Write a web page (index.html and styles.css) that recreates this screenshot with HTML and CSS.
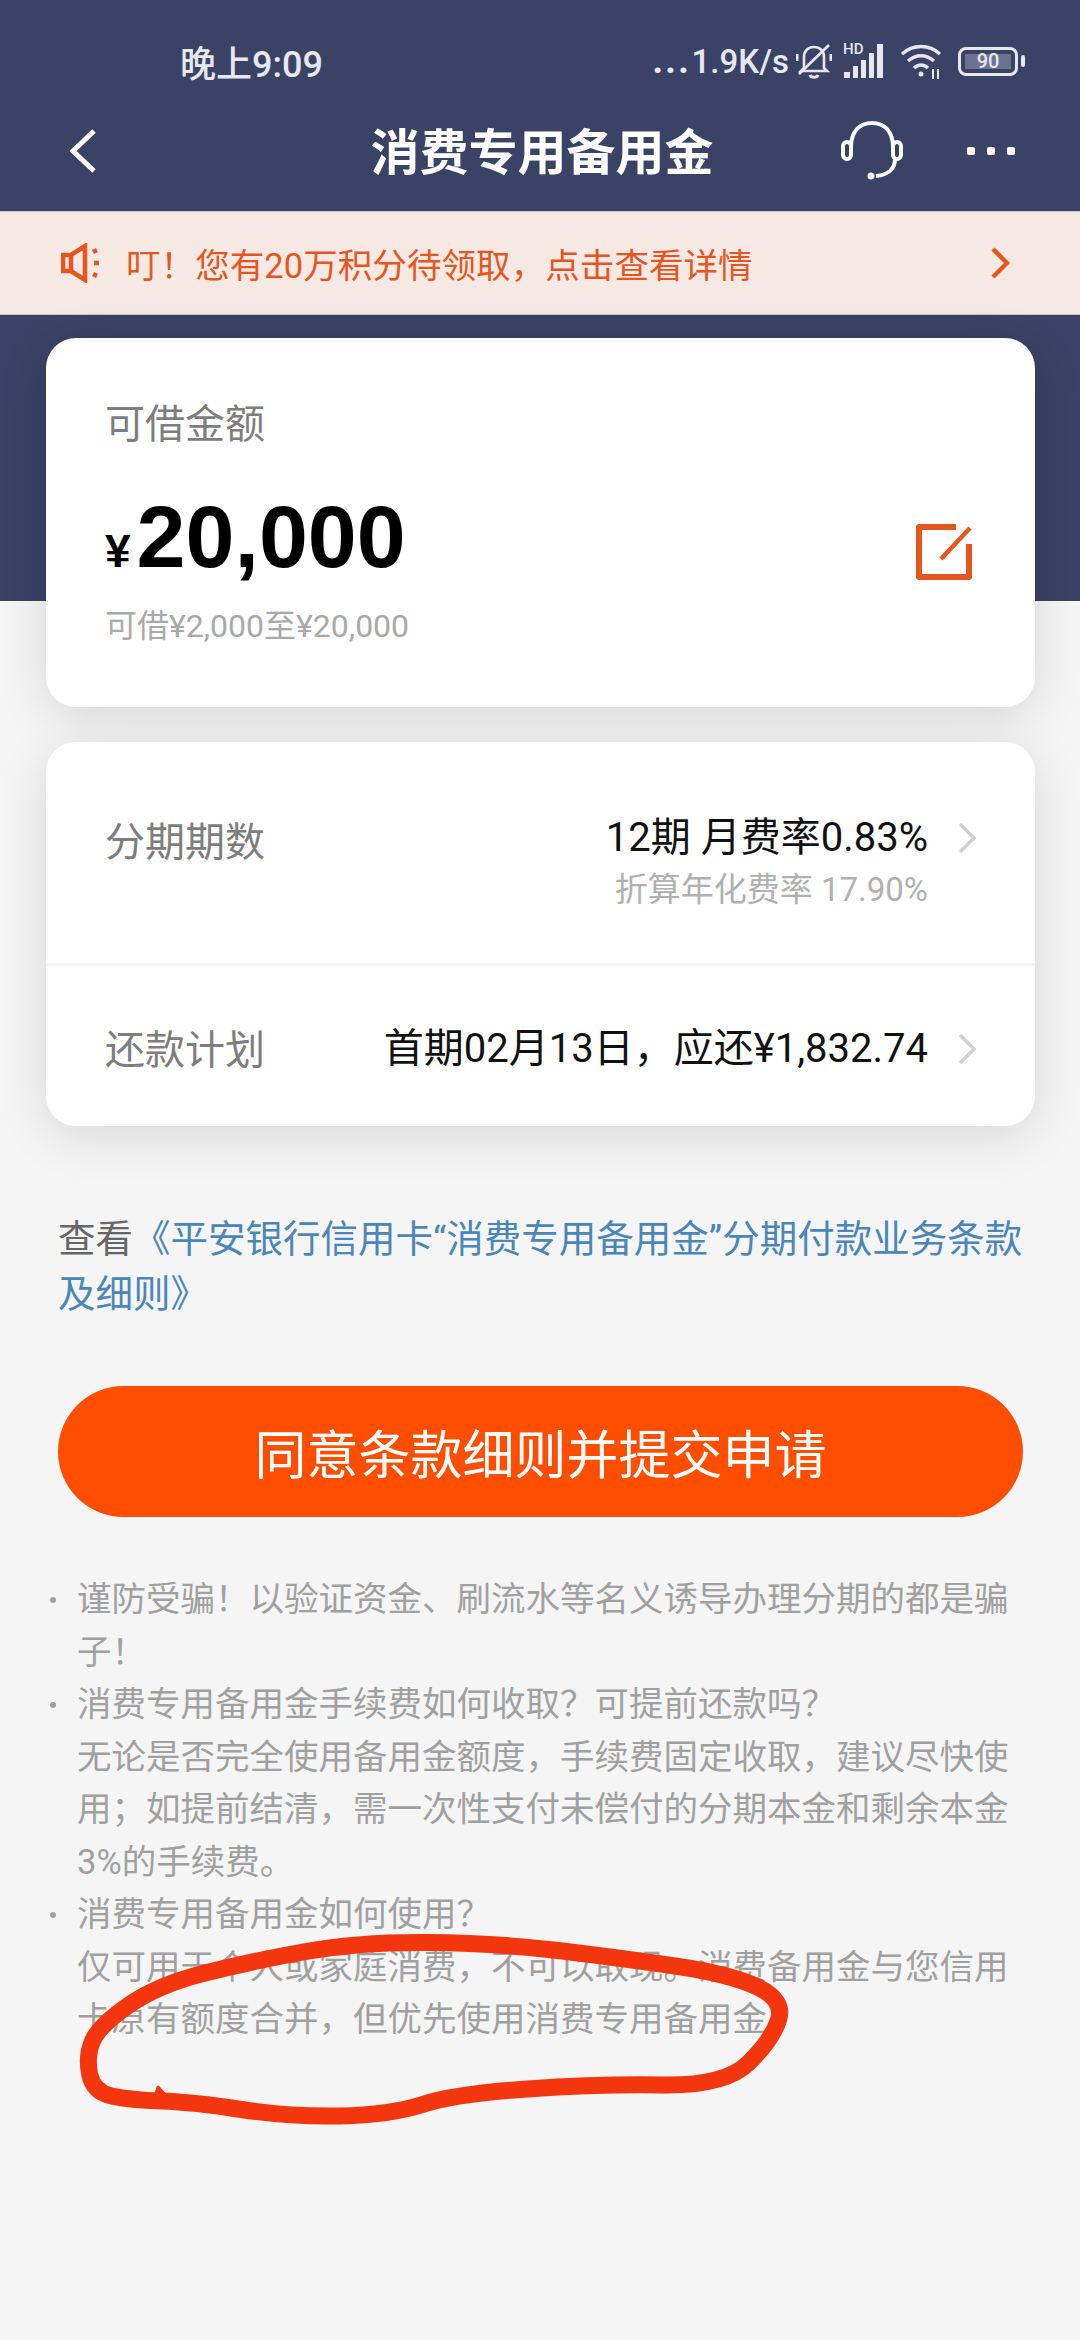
FILE: index.html
```html
<!DOCTYPE html>
<html lang="zh-CN">
<head>
    <meta charset="UTF-8">
    <meta name="viewport" content="width=device-width, initial-scale=1.0">
    <title>消费专用备用金</title>
    <link rel="stylesheet" href="styles.css">
</head>
<body>
    <div class="page">
        <header class="top">
            <div class="status">
                <span class="time">晚上9:09</span>
                <div class="status-right">
                    <span class="speed"><i class="dots">...</i>1.9K/s</span>
                    <svg class="bell" width="36" height="40" viewBox="0 0 36 40" fill="none" stroke="#e6e8f0" stroke-width="2.6">
                        <path d="M8 27V16c0-6 4-10 10-10s10 4 10 10v11l3 3H5z"/>
                        <path d="M14 34c1 3 7 3 8 0" stroke-width="3"/>
                        <path d="M3 33L33 4"/>
                        <path d="M1 13v7M35 13v7" stroke-width="3"/>
                    </svg>
                    <svg class="signal" width="42" height="40" viewBox="0 0 42 40" fill="#e6e8f0">
                        <text x="0" y="13" class="hd">HD</text>
                        <rect x="1" y="31" width="6" height="6"/>
                        <rect x="10" y="25" width="5" height="12"/>
                        <rect x="18" y="19" width="5" height="18"/>
                        <rect x="26" y="12" width="5" height="25"/>
                        <rect x="34" y="3" width="6" height="34"/>
                    </svg>
                    <svg class="wifi" width="42" height="40" viewBox="0 0 42 40" fill="none" stroke="#e6e8f0" stroke-width="3.4">
                        <path d="M2 13c11-10 27-10 38 0"/>
                        <path d="M8 20c8-7 18-7 26 0"/>
                        <path d="M14 27c4-4 10-4 14 0"/>
                        <circle cx="21" cy="33" r="2.5" fill="#e6e8f0" stroke="none"/>
                        <path d="M33 28v10M38 28v10" stroke-width="2"/>
                    </svg>
                    <div class="battery"><span class="battery-level">90</span></div>
                </div>
            </div>
            <nav class="nav">
                <svg class="back" width="28" height="44" viewBox="0 0 28 44" fill="none" stroke="#fff" stroke-width="5">
                    <path d="M25 2L4 22l21 20"/>
                </svg>
                <h1 class="title">消费专用备用金</h1>
                <div class="nav-actions">
                    <svg class="headset" width="64" height="60" viewBox="0 0 64 60" fill="none" stroke="#fff" stroke-width="4">
                        <path d="M11 26C11 10 20 2 32 2s21 8 21 24"/>
                        <rect x="3" y="21" width="8" height="17" rx="4"/>
                        <rect x="53" y="21" width="8" height="17" rx="4"/>
                        <path d="M55 38c0 10-7 16-19 17"/>
                        <circle cx="31" cy="55" r="3.5" fill="#fff" stroke="none"/>
                    </svg>
                    <svg class="more" width="48" height="10" viewBox="0 0 48 10" fill="#fff">
                        <rect x="0" y="1" width="8" height="8" rx="2"/>
                        <rect x="20" y="1" width="8" height="8" rx="2"/>
                        <rect x="40" y="1" width="8" height="8" rx="2"/>
                    </svg>
                </div>
            </nav>
        </header>

        <div class="notice">
            <svg class="horn" width="40" height="40" viewBox="0 0 40 40" fill="none" stroke="#e5561f" stroke-width="4.5">
                <path d="M2 12h8v16H2zM10 12L24 3v34L10 28"/>
                <path d="M32 9l4-2M33 20h5M32 31l4 2"/>
            </svg>
            <span class="notice-text">叮！您有20万积分待领取，点击查看详情</span>
            <svg class="notice-arrow" width="20" height="32" viewBox="0 0 20 32" fill="none" stroke="#e5561f" stroke-width="4.4">
                <path d="M3 2l14 14L3 30"/>
            </svg>
        </div>

        <main class="content">
            <section class="card amount-card">
                <div>
                    <p class="label">可借金额</p>
                    <p class="amount"><span class="yen">¥</span>20,000</p>
                    <p class="range">可借¥2,000至¥20,000</p>
                </div>
                <svg class="edit" width="56" height="56" viewBox="0 0 56 56" fill="none" stroke="#e5561f" stroke-width="6" stroke-linejoin="round">
                    <path d="M40 3H3v50h50V20"/>
                    <path d="M54 4L25 35" stroke-width="4.5"/>
                </svg>
            </section>

            <section class="card plan-card">
                <div class="row row-term">
                    <span class="label">分期期数</span>
                    <div class="value">
                        <p class="value-main">12期 月费率0.83%</p>
                        <p class="value-sub">折算年化费率 17.90%</p>
                    </div>
                    <svg class="chevron" width="20" height="30" viewBox="0 0 20 30" fill="none" stroke="#d0d0d0" stroke-width="3.4">
                        <path d="M3 1l14 14L3 29"/>
                    </svg>
                </div>
                <div class="row row-plan">
                    <span class="label">还款计划</span>
                    <div class="value">
                        <p class="value-main">首期02月13日，应还¥1,832.74</p>
                    </div>
                    <svg class="chevron" width="20" height="30" viewBox="0 0 20 30" fill="none" stroke="#d0d0d0" stroke-width="3.4">
                        <path d="M3 1l14 14L3 29"/>
                    </svg>
                </div>
            </section>

            <p class="terms">查看<a href="#">《平安银行信用卡“消费专用备用金”分期付款业务条款及细则》</a></p>

            <button class="submit">同意条款细则并提交申请</button>

            <ul class="tips">
                <li>谨防受骗！以验证资金、刷流水等名义诱导办理分期的都是骗子！</li>
                <li>消费专用备用金手续费如何收取？可提前还款吗？<br>无论是否完全使用备用金额度，手续费固定收取，建议尽快使用；如提前结清，需一次性支付未偿付的分期本金和剩余本金3%的手续费。</li>
                <li>消费专用备用金如何使用？<br>仅可用于个人或家庭消费，不可以取现。消费备用金与您信用卡原有额度合并，但优先使用消费专用备用金。</li>
            </ul>
        </main>

        <!-- hand drawn mark on top of the screenshot -->
        <svg class="scribble" width="1080" height="2340" viewBox="0 0 1080 2340" fill="none" stroke="#f4360f" stroke-linejoin="round">
            <path d="M111.5 2096Q93 2092 89.5 2073.5Q86 2055 93 2040Q100 2025 129 2005Q158 1985 203 1973.5Q248 1962 303 1952Q358 1942 427 1942.5Q496 1943 558 1950.5Q620 1958 675 1966Q730 1974 757.5 1987Q785 2000 778.5 2020Q772 2040 748.5 2063Q725 2086 662.5 2085Q600 2084 527.5 2089Q455 2094 422.5 2104.5Q390 2115 340 2116Q290 2117 241.5 2109.5Q193 2102 161.5 2101Q130 2100 111.5 2096Z" stroke-width="17"/>
            <path d="M158 2087l-3 10h12z" fill="#f4360f" stroke-width="3"/>
        </svg>
    </div>
</body>
</html>
```

FILE: styles.css
```css
* {
    box-sizing: border-box;
}
body {
    margin: 0;
    background: #f5f5f5;
    font-family: "Roboto", "Noto Sans CJK SC", sans-serif;
}
p, h1, ul {
    margin: 0;
    padding: 0;
}
.page {
    position: relative;
    width: 1080px;
    height: 2340px;
    overflow: hidden;
}

/* top bar */
.top {
    height: 211px;
    background: #3a4265;
}
.status {
    display: flex;
    align-items: center;
    justify-content: space-between;
    height: 82px;
    padding: 40px 62px 0 180px;
    color: #e6e8f0;
}
.time {
    font-size: 36px;
    font-weight: 500;
}
.status-right {
    display: flex;
    align-items: center;
}
.speed {
    font-size: 33px;
    font-weight: 500;
}
.dots {
    font-style: normal;
    font-weight: 900;
    letter-spacing: 3px;
}
.bell {
    margin-left: 7px;
}
.signal {
    margin-left: 11px;
}
.hd {
    font-size: 15px;
    font-weight: 500;
}
.wifi {
    margin-left: 15px;
}
.battery {
    position: relative;
    width: 60px;
    height: 29px;
    margin-left: 16px;
    padding: 4px;
    border: 3px solid #e6e8f0;
    border-radius: 8px;
}
.battery::after {
    content: "";
    position: absolute;
    right: -10px;
    top: 5px;
    width: 4px;
    height: 12px;
    background: #e6e8f0;
    border-radius: 2px;
}
.battery-level {
    display: block;
    height: 100%;
    background: #6c7391;
    font-size: 20px;
    font-weight: 500;
    line-height: 15px;
    text-align: center;
}
.nav {
    display: grid;
    grid-template-columns: 1fr auto 1fr;
    align-items: center;
    height: 129px;
    padding: 9px 65px 0 69px;
}
.title {
    padding-bottom: 5px;
    color: #fff;
    font-size: 49px;
    font-weight: 700;
}
.nav-actions {
    display: flex;
    align-items: center;
    justify-content: flex-end;
    gap: 63px;
}

/* notice */
.notice {
    display: flex;
    align-items: center;
    height: 104px;
    padding: 0 70px 0 61px;
    background: #f6e9e3;
    border-top: 1px solid #c9c6cf;
    border-bottom: 1px solid #c9c6cf;
}
.notice-text {
    flex: 1;
    margin-left: 25px;
    color: #e5561f;
    font-size: 34.6px;
}

/* cards */
.content {
    padding: 23px 45px 0 46px;
    background: linear-gradient(#3a4265 286px, #f5f5f5 286px);
}
.card {
    background: #fff;
    border-radius: 30px;
    box-shadow: 0 10px 50px rgba(0, 0, 0, 0.12);
}
.amount-card {
    display: flex;
    align-items: center;
    justify-content: space-between;
    height: 369px;
    padding: 0 63px 0 59px;
}
.label {
    color: #7d7d7d;
    font-size: 40px;
    line-height: 52px;
}
.amount {
    margin-top: 36px;
    color: #000;
    font-family: "Liberation Sans", sans-serif;
    font-size: 88px;
    font-weight: 700;
    line-height: 100px;
}
.yen {
    font-size: 46px;
    margin-right: 6px;
}
.range {
    margin-top: 4px;
    color: #a9a9a9;
    font-size: 32px;
    line-height: 42px;
}
.edit {
    margin-top: 58px;
}
.plan-card {
    margin-top: 35px;
    height: 384px;
}
.row {
    display: flex;
    align-items: flex-start;
    padding: 0 58px 0 59px;
}
.row .label {
    margin-top: 1px;
}
.row-term {
    height: 224px;
    padding-top: 71px;
    border-bottom: 3px solid #f3f3f3;
}
.row-term .label {
    margin-top: 4px;
}
.row-plan {
    padding-top: 58px;
}
.value {
    flex: 1;
    text-align: right;
}
.value-main {
    color: #111;
    font-size: 40px;
    line-height: 50px;
}
.value-sub {
    margin-top: 5px;
    color: #b0b0b0;
    font-size: 33px;
    line-height: 44px;
}
.chevron {
    margin: 10px 0 0 29px;
}

/* terms + button */
.terms {
    margin: 86px 0 0 12px;
    color: #666;
    font-size: 37.5px;
    line-height: 55px;
}
.terms a {
    color: #4a86b8;
    text-decoration: none;
}
.submit {
    display: block;
    width: 965px;
    height: 131px;
    margin: 64px 0 0 12px;
    border: 0;
    border-radius: 66px;
    background: #ff4e00;
    color: #fff;
    font-family: inherit;
    font-size: 52px;
}

/* tips */
.tips {
    margin: 56px 0 0 31px;
    padding-right: 10px;
    color: #a0a0a0;
    font-size: 34.5px;
    line-height: 52.5px;
    list-style: none;
}
.tips li {
    position: relative;
}
.tips li::before {
    content: "";
    position: absolute;
    left: -27px;
    top: 24px;
    width: 6px;
    height: 6px;
    border-radius: 50%;
    background: #a0a0a0;
}

.scribble {
    position: absolute;
    left: 0;
    top: 0;
}
```
